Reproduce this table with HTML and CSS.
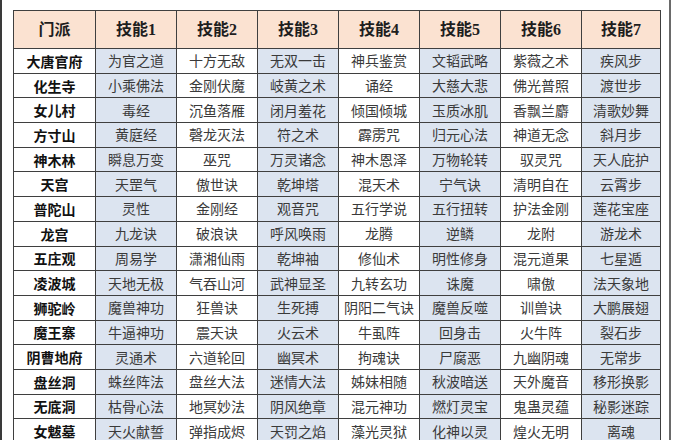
FILE: index.html
```html
<!DOCTYPE html>
<html lang="zh">
<head>
<meta charset="utf-8">
<link rel="stylesheet" href="styles.css">
</head>
<body>
<div class="frame">
<table class="skills">
<colgroup>
<col class="c0"><col class="c"><col class="c"><col class="c"><col class="c"><col class="c"><col class="c"><col class="c7">
</colgroup>
<thead>
<tr><th>门派</th><th>技能1</th><th>技能2</th><th>技能3</th><th>技能4</th><th>技能5</th><th>技能6</th><th>技能7</th></tr>
</thead>
<tbody>
<tr><th>大唐官府</th><td class="b">为官之道</td><td>十方无敌</td><td class="b">无双一击</td><td>神兵鉴赏</td><td class="b">文韬武略</td><td>紫薇之术</td><td class="b">疾风步</td></tr>
<tr><th>化生寺</th><td class="b">小乘佛法</td><td>金刚伏魔</td><td class="b">岐黄之术</td><td>诵经</td><td class="b">大慈大悲</td><td>佛光普照</td><td class="b">渡世步</td></tr>
<tr><th>女儿村</th><td class="b">毒经</td><td>沉鱼落雁</td><td class="b">闭月羞花</td><td>倾国倾城</td><td class="b">玉质冰肌</td><td>香飘兰麝</td><td class="b">清歌妙舞</td></tr>
<tr><th>方寸山</th><td class="b">黄庭经</td><td>磬龙灭法</td><td class="b">符之术</td><td>霹雳咒</td><td class="b">归元心法</td><td>神道无念</td><td class="b">斜月步</td></tr>
<tr><th>神木林</th><td class="b">瞬息万变</td><td>巫咒</td><td class="b">万灵诸念</td><td>神木恩泽</td><td class="b">万物轮转</td><td>驭灵咒</td><td class="b">天人庇护</td></tr>
<tr><th>天宫</th><td class="b">天罡气</td><td>傲世诀</td><td class="b">乾坤塔</td><td>混天术</td><td class="b">宁气诀</td><td>清明自在</td><td class="b">云霄步</td></tr>
<tr><th>普陀山</th><td class="b">灵性</td><td>金刚经</td><td class="b">观音咒</td><td>五行学说</td><td class="b">五行扭转</td><td>护法金刚</td><td class="b">莲花宝座</td></tr>
<tr><th>龙宫</th><td class="b">九龙诀</td><td>破浪诀</td><td class="b">呼风唤雨</td><td>龙腾</td><td class="b">逆鳞</td><td>龙附</td><td class="b">游龙术</td></tr>
<tr><th>五庄观</th><td class="b">周易学</td><td>潇湘仙雨</td><td class="b">乾坤袖</td><td>修仙术</td><td class="b">明性修身</td><td>混元道果</td><td class="b">七星遁</td></tr>
<tr><th>凌波城</th><td class="b">天地无极</td><td>气吞山河</td><td class="b">武神显圣</td><td>九转玄功</td><td class="b">诛魔</td><td>啸傲</td><td class="b">法天象地</td></tr>
<tr><th>狮驼岭</th><td class="b">魔兽神功</td><td>狂兽诀</td><td class="b">生死搏</td><td>阴阳二气诀</td><td class="b">魔兽反噬</td><td>训兽诀</td><td class="b">大鹏展翅</td></tr>
<tr><th>魔王寨</th><td class="b">牛逼神功</td><td>震天诀</td><td class="b">火云术</td><td>牛虱阵</td><td class="b">回身击</td><td>火牛阵</td><td class="b">裂石步</td></tr>
<tr><th>阴曹地府</th><td class="b">灵通术</td><td>六道轮回</td><td class="b">幽冥术</td><td>拘魂诀</td><td class="b">尸腐恶</td><td>九幽阴魂</td><td class="b">无常步</td></tr>
<tr><th>盘丝洞</th><td class="b">蛛丝阵法</td><td>盘丝大法</td><td class="b">迷情大法</td><td>姊妹相随</td><td class="b">秋波暗送</td><td>天外魔音</td><td class="b">移形换影</td></tr>
<tr><th>无底洞</th><td class="b">枯骨心法</td><td>地冥妙法</td><td class="b">阴风绝章</td><td>混元神功</td><td class="b">燃灯灵宝</td><td>鬼蛊灵蕴</td><td class="b">秘影迷踪</td></tr>
<tr><th>女魃墓</th><td class="b">天火献誓</td><td>弹指成烬</td><td class="b">天罚之焰</td><td>藻光灵狱</td><td class="b">化神以灵</td><td>煌火无明</td><td class="b">离魂</td></tr>
</tbody>
</table>
</div>
</body>
</html>
```

FILE: styles.css
```css
html, body {
  margin: 0;
  padding: 0;
  background: #ffffff;
  overflow: hidden;
}

.frame {
  box-sizing: border-box;
  width: 671px;
  height: 440px;
  border-left: 2px solid #3a3a3a;
  border-right: 2px solid #6a6a6a;
  padding: 10px 0 0 11px;
  overflow: hidden;
}

.skills {
  border-collapse: collapse;
  table-layout: fixed;
  width: 647px;
  font-family: "Noto Sans CJK SC", sans-serif;
}

.c0 { width: 82px; }
.c { width: 81px; }
.c7 { width: 79px; }

.skills th,
.skills td {
  border: 1px solid #3f3f3f;
  padding: 0;
  text-align: center;
  vertical-align: middle;
  white-space: nowrap;
  overflow: hidden;
  line-height: 1;
}

.skills thead tr {
  height: 38px;
}

.skills thead th {
  background: #fbe2d1;
  font-family: "Liberation Serif", "Noto Sans CJK SC", serif;
  font-size: 16px;
  font-weight: 700;
  color: #1e1e1e;
}

.skills tbody tr {
  height: 24.7px;
}

.skills tbody th {
  font-size: 14px;
  font-weight: 700;
  color: #111111;
  background: #ffffff;
}

.skills td {
  font-size: 14px;
  font-weight: 400;
  color: #3a3a3a;
  background: #ffffff;
  padding-bottom: 1px;
}

.skills td.b {
  background: #dce4f0;
}
```
